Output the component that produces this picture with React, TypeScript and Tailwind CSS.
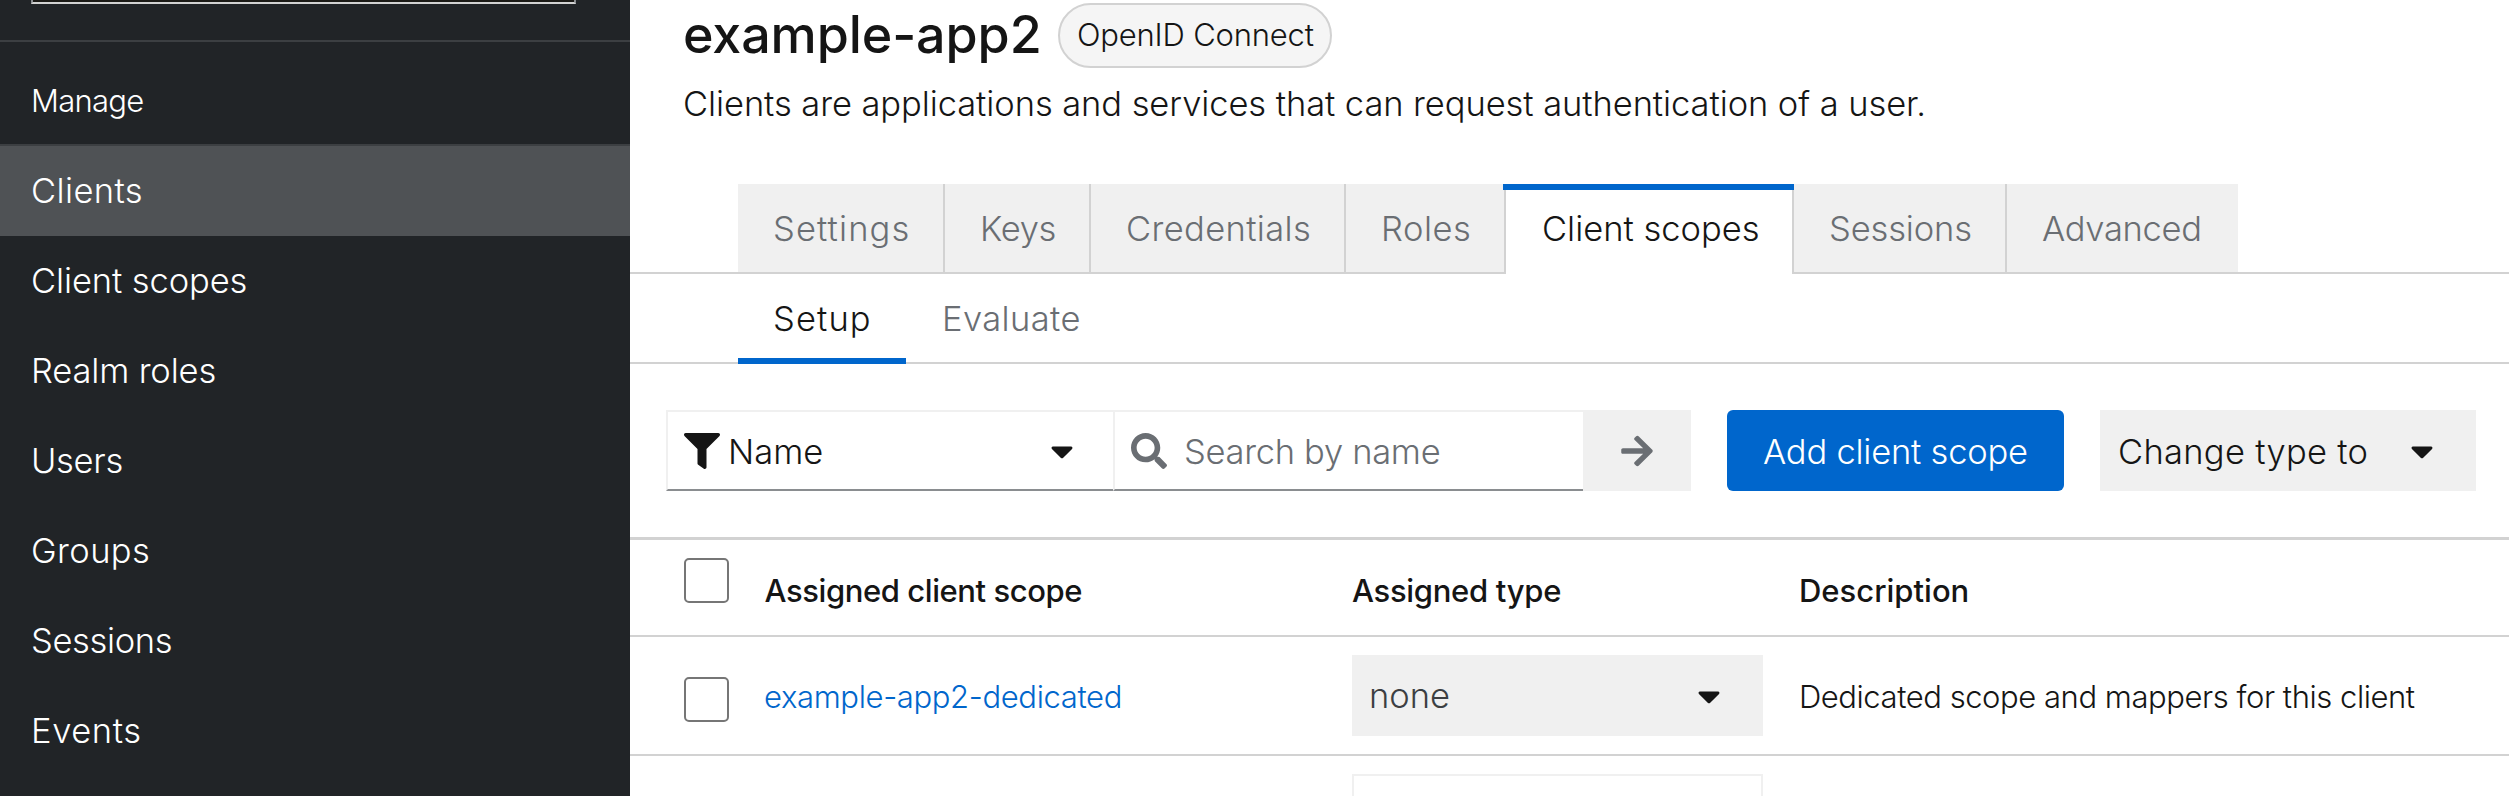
import type { ReactNode } from "react";
import { FaArrowRight, FaCaretDown, FaFilter, FaSearch } from "react-icons/fa";

const navItems = [
  { label: "Clients", className: "bg-[#4f5255] tracking-[0.4px]" },
  { label: "Client scopes", className: "tracking-[-0.1px]" },
  { label: "Realm roles", className: "tracking-[-0.15px]" },
  { label: "Users", className: "tracking-[-0.3px]" },
  { label: "Groups", className: "tracking-[0.4px]" },
  { label: "Sessions", className: "tracking-[-0.35px]" },
  { label: "Events", className: "tracking-[0.6px]" },
];

const tabs = [
  { label: "Settings", className: "w-[207px] border-r-2 tracking-[1.1px]" },
  { label: "Keys", className: "w-[146px] border-r-2 tracking-[-0.3px]" },
  { label: "Credentials", className: "w-[255px] border-r-2 tracking-[0.36px]" },
  { label: "Roles", className: "w-[158px] tracking-[0.5px]" },
  { label: "Client scopes", active: true, className: "w-[290px]" },
  { label: "Sessions", className: "w-[213px] border-r-2 tracking-[-0.15px]" },
  { label: "Advanced", className: "w-[231px] tracking-[-0.3px]" },
];

function Sidebar() {
  return (
    <aside className="flex h-full w-[630px] shrink-0 flex-col bg-[#212427] font-[350] text-white">
      <div className="h-[42px] shrink-0 border-b-2 border-[#3c3f42] pl-[31px]">
        <div className="h-1 w-[545px] border-x-2 border-b-2 border-x-[#8a8d90] border-b-[#d2d2d2] bg-[#1b1a16]" />
      </div>
      <h2 className="flex h-[104px] shrink-0 items-center border-b-2 border-[#3c3f42] pt-4 pl-[31px] text-[31px] font-[350] tracking-[-0.75px]">
        Manage
      </h2>
      <nav>
        {navItems.map((item) => (
          <a key={item.label} className={`flex h-[90px] items-center pl-[31px] ${item.className}`}>
            {item.label}
          </a>
        ))}
      </nav>
    </aside>
  );
}

function Caret() {
  return <FaCaretDown className="h-9 w-9 shrink-0 text-[#151515]" />;
}

function Checkbox({ className }: { className: string }) {
  return <span className={`block h-[45px] w-[45px] rounded-[5px] border-[2.5px] border-[#767676] bg-white ${className}`} />;
}

function Row({ children, className }: { children: ReactNode; className: string }) {
  return (
    <div className={`grid grid-cols-[80px_588px_447px_1fr] pl-[54px] ${className}`}>{children}</div>
  );
}

export default function App() {
  return (
    <div className="flex h-[796px] w-[2509px] overflow-hidden bg-white font-['Inter',sans-serif] text-[34.5px] font-light whitespace-nowrap text-[#151515]">
      <Sidebar />
      <main className="flex min-w-0 flex-1 flex-col">
        <header className="h-[184px] shrink-0 pl-[53px]">
          <div className="flex h-[78px] items-start">
            <h1 className="w-[375px] text-[52px] leading-[69px] font-[460] tracking-[-0.1px]">example-app2</h1>
            <span className="mt-[3px] flex h-[65px] w-[274px] items-center rounded-full border-2 border-[#d2d2d2] bg-[#f5f5f5] pb-px pl-[17px] text-[31px] tracking-[-0.2px]">
              OpenID Connect
            </span>
          </div>
          <p className="leading-[51px] tracking-[-0.08px]">
            Clients are applications and services that can request authentication of a user.
          </p>
        </header>

        <nav className="flex h-[90px] shrink-0">
          <div className="w-[108px] border-b-2 border-[#d2d2d2]" />
          {tabs.map((tab) =>
            tab.active ? (
              <a key={tab.label} className={`relative flex items-center border-x-2 border-[#d2d2d2] pl-9 ${tab.className}`}>
                <span className="absolute top-0 -right-0.5 -left-[3px] h-1.5 bg-[#0066cc]" />
                {tab.label}
              </a>
            ) : (
              <a key={tab.label} className={`flex items-center border-b-2 border-[#d2d2d2] bg-[#f0f0f0] pt-0.5 pl-[35px] text-[#6a6e73] ${tab.className}`}>
                {tab.label}
              </a>
            ),
          )}
          <div className="flex-1 border-b-2 border-[#d2d2d2]" />
        </nav>

        <nav className="flex h-[90px] shrink-0 border-b-2 border-[#d2d2d2] pl-[108px]">
          <a className="relative flex w-[168px] items-center pt-0.5 pl-[35px] tracking-[1.1px]">
            Setup
            <span className="absolute right-0 -bottom-0.5 left-0 h-1.5 bg-[#0066cc]" />
          </a>
          <a className="flex items-center pt-0.5 pl-9 tracking-[0.39px] text-[#6a6e73]">Evaluate</a>
        </nav>

        <section className="mt-[46px] flex h-[81px] shrink-0 pl-9">
          <div className="flex w-[447px] items-center border-2 border-r-0 border-[#f0f0f0] border-b-[#8a8d90] pr-[33px] pl-4">
            <FaFilter className="h-9 w-9" />
            <span className="flex-1 pt-0.5 pl-2">Name</span>
            <Caret />
          </div>
          <div className="flex w-[470px] items-center border-2 border-r-0 border-[#f0f0f0] border-b-[#8a8d90] pl-4 text-[#6a6e73]">
            <FaSearch className="h-9 w-9" />
            <span className="pt-0.5 pl-[17px] tracking-[-0.3px]">Search by name</span>
          </div>
          <button className="flex w-[108px] items-center justify-center bg-[#f0f0f0] text-[#6a6e73]">
            <FaArrowRight className="h-9 w-9" />
          </button>
          <button className="ml-9 flex w-[337px] items-center rounded-[6px] bg-[#0066cc] pt-0.5 pl-9 tracking-[-0.22px] text-white">
            Add client scope
          </button>
          <button className="ml-9 flex w-[376px] items-center justify-between bg-[#f0f0f0] pr-9 pl-[18px]">
            <span className="pt-0.5 tracking-[0.29px]">Change type to</span>
            <Caret />
          </button>
        </section>

        <section className="mt-[46px] shrink-0 border-t-[3px] border-[#d2d2d2] text-[31px]">
          <Row className="h-[97px] border-b-2 border-[#d2d2d2] font-medium">
            <Checkbox className="mt-[18px]" />
            <div className="flex items-center pt-2 pl-[0.5px] tracking-[-0.42px]">Assigned client scope</div>
            <div className="flex items-center pt-2 tracking-[-0.3px]">Assigned type</div>
            <div className="flex items-center pt-2">Description</div>
          </Row>
          <Row className="h-[119px] border-b-2 border-[#d2d2d2]">
            <Checkbox className="mt-10" />
            <a className="flex items-center pt-[3px] tracking-[-0.36px] text-[#0066cc]">example-app2-dedicated</a>
            <div className="flex items-center">
              <div className="flex h-[81px] w-[411px] items-center justify-between bg-[#f0f0f0] pr-9 pl-[17px] text-[34.5px] text-[#3c3f42]">
                <span>none</span>
                <Caret />
              </div>
            </div>
            <div className="flex items-center pt-[3px] tracking-[-0.45px]">
              Dedicated scope and mappers for this client
            </div>
          </Row>
          <Row className="h-[117px] pt-[18px]">
            <div className="col-start-3 h-[81px] w-[411px] border-2 border-[#f0f0f0]" />
          </Row>
        </section>
      </main>
    </div>
  );
}
